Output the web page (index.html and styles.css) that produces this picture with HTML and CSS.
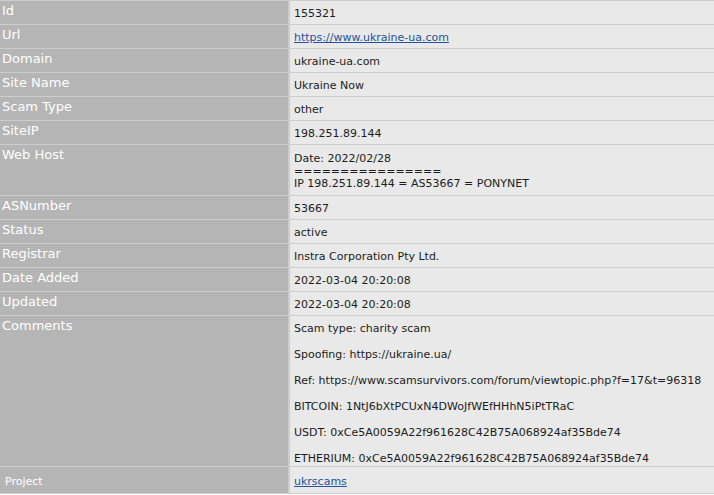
FILE: index.html
```html
<!DOCTYPE html>
<html>
<head>
<meta charset="utf-8">
<link rel="stylesheet" href="styles.css">
</head>
<body>
<div class="record">
  <div class="label">Id</div>
  <div class="value">155321</div>

  <div class="label">Url</div>
  <div class="value"><a href="#">https://www.ukraine-ua.com</a></div>

  <div class="label">Domain</div>
  <div class="value">ukraine-ua.com</div>

  <div class="label">Site Name</div>
  <div class="value">Ukraine Now</div>

  <div class="label">Scam Type</div>
  <div class="value">other</div>

  <div class="label">SiteIP</div>
  <div class="value">198.251.89.144</div>

  <div class="label">Web Host</div>
  <div class="value multi">Date: 2022/02/28<br>================<br>IP 198.251.89.144 = AS53667 = PONYNET</div>

  <div class="label">ASNumber</div>
  <div class="value">53667</div>

  <div class="label">Status</div>
  <div class="value">active</div>

  <div class="label">Registrar</div>
  <div class="value">Instra Corporation Pty Ltd.</div>

  <div class="label">Date Added</div>
  <div class="value">2022-03-04 20:20:08</div>

  <div class="label">Updated</div>
  <div class="value">2022-03-04 20:20:08</div>

  <div class="label">Comments</div>
  <div class="value comments">
    <p>Scam type: charity scam</p>
    <p>Spoofing: https://ukraine.ua/</p>
    <p>Ref: https://www.scamsurvivors.com/forum/viewtopic.php?f=17&amp;t=96318</p>
    <p>BITCOIN: 1NtJ6bXtPCUxN4DWoJfWEfHHhN5iPtTRaC</p>
    <p>USDT: 0xCe5A0059A22f961628C42B75A068924af35Bde74</p>
    <p>ETHERIUM: 0xCe5A0059A22f961628C42B75A068924af35Bde74</p>
  </div>

  <div class="label small">Project</div>
  <div class="value project"><a href="#">ukrscams</a></div>
</div>
</body>
</html>
```
FILE: styles.css
```css
html, body {
  margin: 0;
  padding: 0;
  background: #ffffff;
}

.record {
  display: grid;
  grid-template-columns: 288px 1fr;
  gap: 1px 2px;
  padding: 1px 0 1px 0;
  background: #cdcdcd;
  font-family: "DejaVu Sans", Verdana, sans-serif;
}

.label {
  background: #b5b5b5;
  color: #ffffff;
  font-size: 13px;
  line-height: 16px;
  padding: 2px 2px 0 2px;
}

.label.small {
  font-size: 11px;
  line-height: 14px;
  padding: 8px 5px 0 5px;
}

.value {
  background: #e9e9e9;
  color: #1c1c1c;
  font-size: 11px;
  line-height: 14px;
  padding: 6px 4px 3px 4px;
  white-space: nowrap;
}

.value a {
  color: #24529f;
  text-decoration: underline;
}

.value.multi {
  line-height: 12.5px;
  padding: 8px 4px 4.5px 4px;
}

.value.comments {
  padding: 6px 4px 0 4px;
}

.value.comments p {
  margin: 0 0 12px 0;
}

.value.comments p:last-child {
  margin-bottom: 0;
}

.value.project {
  padding: 8px 4px 4px 4px;
}
```
